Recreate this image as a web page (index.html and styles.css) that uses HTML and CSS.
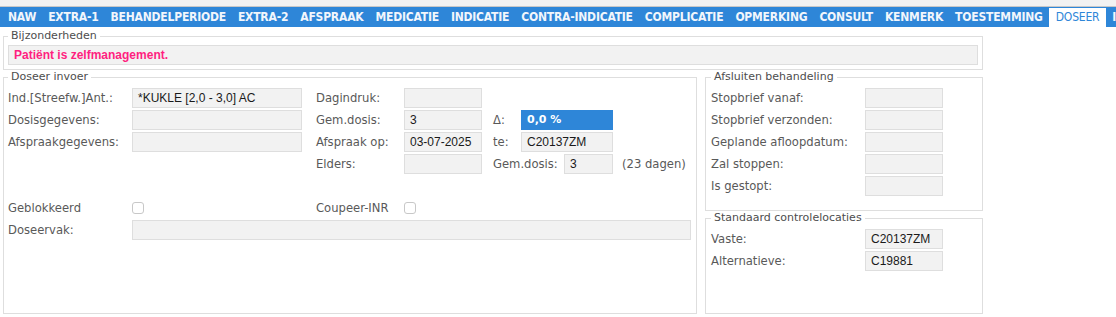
FILE: index.html
```html
<!DOCTYPE html>
<html lang="nl">
<head>
    <meta charset="UTF-8">
    <meta name="viewport" content="width=device-width, initial-scale=1.0">
    <title>Doseer</title>
    <link rel="stylesheet" href="styles.css">
</head>
<body>
<div class="page">

    <!-- Tabbladen -->
    <div class="page-top">
        <nav class="tabs">
            <span class="tab">NAW</span>
            <span class="tab">EXTRA-1</span>
            <span class="tab">BEHANDELPERIODE</span>
            <span class="tab">EXTRA-2</span>
            <span class="tab">AFSPRAAK</span>
            <span class="tab">MEDICATIE</span>
            <span class="tab">INDICATIE</span>
            <span class="tab">CONTRA-INDICATIE</span>
            <span class="tab">COMPLICATIE</span>
            <span class="tab">OPMERKING</span>
            <span class="tab">CONSULT</span>
            <span class="tab">KENMERK</span>
            <span class="tab">TOESTEMMING</span>
            <span class="tab active">DOSEER</span>
            <span class="tab">I</span>
        </nav>
    </div>

    <div class="content">
        <fieldset class="box box-notes">
            <legend>Bijzonderheden</legend>
            <div class="note">Patiënt is zelfmanagement.</div>
        </fieldset>

        <div class="panels">
            <fieldset class="box box-dose">
                <legend>Doseer invoer</legend>
                <div class="dose-grid">
                    <span class="lbl">Ind.[Streefw.]Ant.:</span>
                    <span class="field">*KUKLE [2,0 - 3,0] AC</span>
                    <span class="lbl lbl-mid">Dagindruk:</span>
                    <span class="field"></span>

                    <span class="lbl lbl-first">Dosisgegevens:</span>
                    <span class="field"></span>
                    <span class="lbl lbl-mid">Gem.dosis:</span>
                    <span class="field">3</span>
                    <span class="lbl lbl-small">Δ:</span>
                    <span class="field field-blue">0,0 %</span>

                    <span class="lbl lbl-first">Afspraakgegevens:</span>
                    <span class="field"></span>
                    <span class="lbl lbl-mid">Afspraak op:</span>
                    <span class="field">03-07-2025</span>
                    <span class="lbl lbl-small">te:</span>
                    <span class="field">C20137ZM</span>

                    <span class="lbl lbl-mid col-3">Elders:</span>
                    <span class="field"></span>
                    <div class="avg">
                        <span class="lbl avg-lbl">Gem.dosis:</span>
                        <span class="field avg-field">3</span>
                        <span class="lbl avg-days">(23 dagen)</span>
                    </div>

                    <div class="spacer"></div>

                    <span class="lbl lbl-first">Geblokkeerd</span>
                    <span class="check-cell"><span class="check"></span></span>
                    <span class="lbl lbl-mid">Coupeer-INR</span>
                    <span class="check-cell"><span class="check"></span></span>

                    <span class="lbl lbl-first">Doseervak:</span>
                    <span class="field field-wide"></span>
                </div>
            </fieldset>

            <div class="side">
                <fieldset class="box box-stop">
                    <legend>Afsluiten behandeling</legend>
                    <div class="side-grid">
                        <span class="lbl">Stopbrief vanaf:</span>
                        <span class="field"></span>
                        <span class="lbl">Stopbrief verzonden:</span>
                        <span class="field"></span>
                        <span class="lbl">Geplande afloopdatum:</span>
                        <span class="field"></span>
                        <span class="lbl">Zal stoppen:</span>
                        <span class="field"></span>
                        <span class="lbl">Is gestopt:</span>
                        <span class="field"></span>
                    </div>
                </fieldset>

                <fieldset class="box box-locs">
                    <legend>Standaard controlelocaties</legend>
                    <div class="side-grid">
                        <span class="lbl">Vaste:</span>
                        <span class="field">C20137ZM</span>
                        <span class="lbl">Alternatieve:</span>
                        <span class="field">C19881</span>
                    </div>
                </fieldset>
            </div>
        </div>
    </div>

</div>
</body>
</html>
```

FILE: styles.css
```css
:root {
    --blue: #2e86d8;
    --label-color: #595959;
    --legend-color: #4d4d4d;
    --line-color: #dedede;
    --field-bg: #f2f2f2;
    --pink: #ff1f80;
}

* {
    box-sizing: border-box;
}

html,
body {
    margin: 0;
    padding: 0;
    background-color: #ffffff;
}

body {
    font-family: "DejaVu Sans", Verdana, sans-serif;
    font-size: 11px;
    color: var(--label-color);
}

.page {
    display: flex;
    flex-direction: column;
    height: 100vh;
    overflow: hidden;
}

/* tabs */
.page-top {
    background-color: #f2f2f2;
    padding-top: 6px;
}

.tabs {
    display: flex;
    height: 21px;
    padding-left: 2px;
    border-top: 1px solid #c8c8c8;
    background-color: var(--blue);
    overflow: hidden;
    white-space: nowrap;
}

.tab {
    flex: none;
    padding: 0 6px;
    font-family: "DejaVu Sans Condensed", "DejaVu Sans", sans-serif;
    font-stretch: condensed;
    font-weight: bold;
    font-size: 12px;
    letter-spacing: -0.2px;
    line-height: 20px;
    color: #f2f6fc;
}

.tab.active {
    margin-top: 1px;
    padding: 0 7px;
    line-height: 19px;
    background-color: #ffffff;
    color: var(--blue);
    font-weight: normal;
}

/* content */
.content {
    flex: 1;
    display: flex;
    flex-direction: column;
    width: 983px;
    padding: 2px 0 3px 3px;
}

.box {
    margin: 0;
    border: 1px solid var(--line-color);
    min-width: 0;
}

.box legend {
    padding: 0 3px;
    font-size: 11px;
    line-height: 14px;
    color: var(--legend-color);
}

.box-notes {
    padding: 2px 4px 4px 4px;
}

.note {
    height: 20px;
    padding-left: 5px;
    border: 1px solid var(--line-color);
    background-color: var(--field-bg);
    font-family: "Liberation Sans", Arial, sans-serif;
    font-weight: bold;
    font-size: 12px;
    line-height: 18px;
    color: var(--pink);
}

.panels {
    flex: 1;
    display: flex;
    gap: 8px;
}

.box-dose {
    width: 694px;
    padding: 4px 5px 4px 4px;
}

.side {
    width: 278px;
    display: flex;
    flex-direction: column;
}

.box-stop {
    padding: 4px 5px 14px 5px;
}

.box-locs {
    flex: 1;
    padding: 4px 5px 4px 5px;
}

/* grids */
.dose-grid {
    display: grid;
    grid-template-columns: 124px 170px 102px 78px 39px 92px 1fr;
    grid-auto-rows: 20px;
    row-gap: 2px;
}

.side-grid {
    display: grid;
    grid-template-columns: 154px 78px;
    grid-auto-rows: 20px;
    row-gap: 2px;
}

.lbl {
    font-size: 11.6px;
    line-height: 20px;
    white-space: nowrap;
    color: var(--label-color);
}

.lbl-first {
    grid-column-start: 1;
}

.lbl-mid {
    padding-left: 14px;
}

.col-3 {
    grid-column-start: 3;
}

.lbl-small {
    padding-left: 11px;
}

.field {
    height: 20px;
    padding-left: 5px;
    border: 1px solid var(--line-color);
    background-color: var(--field-bg);
    font-family: "Liberation Sans", Arial, sans-serif;
    font-size: 12px;
    line-height: 18px;
    color: #1a1a1a;
    white-space: nowrap;
    overflow: hidden;
}

.field-blue {
    border-color: var(--blue);
    background-color: var(--blue);
    font-family: "DejaVu Sans", Verdana, sans-serif;
    font-weight: bold;
    font-size: 11px;
    color: #ffffff;
}

.field-wide {
    grid-column: 2 / -1;
}

.avg {
    grid-column: 5 / -1;
    display: flex;
}

.avg-lbl {
    width: 82px;
    padding-left: 11px;
}

.avg-field {
    width: 49px;
}

.avg-days {
    padding-left: 9px;
}

.spacer {
    grid-column: 1 / -1;
}

.check-cell {
    display: flex;
    align-items: center;
}

.check {
    width: 12px;
    height: 12px;
    border: 1px solid #c8c8c8;
    border-radius: 3px;
    background-color: #ffffff;
}
```
